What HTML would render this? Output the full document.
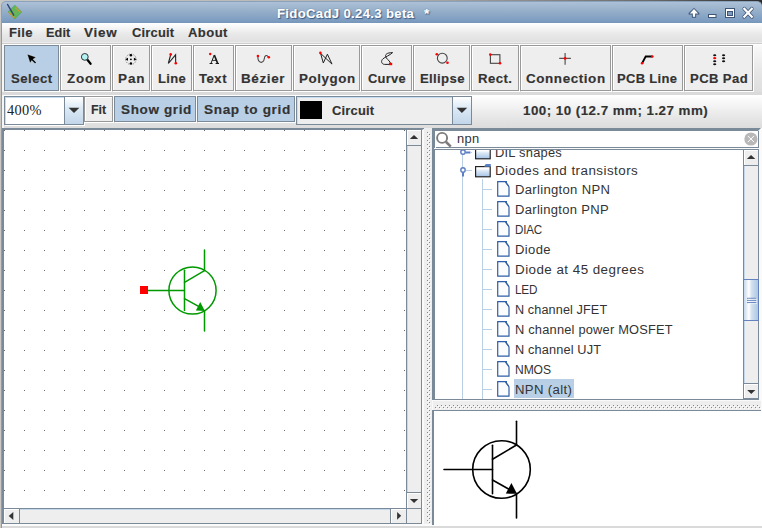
<!DOCTYPE html>
<html><head><meta charset="utf-8">
<style>
*{margin:0;padding:0;box-sizing:border-box}
html,body{width:762px;height:528px;overflow:hidden;background:#eeeeee;font-family:"Liberation Sans",sans-serif}
.a{position:absolute}
.t{position:absolute;white-space:nowrap;line-height:normal;font-family:"Liberation Sans",sans-serif;color:#333}
.btn{position:absolute;background:#eeeeee;border:1px solid #999;box-shadow:inset 1px 1px 0 #fff,1px 1px 0 #fff}
.btn.sel{background:#b8cfe5;border-color:#7a8a99;box-shadow:1px 1px 0 #fff}
.tg{position:absolute;background:#b8cfe5;border:1px solid #7a8a99;box-shadow:1px 1px 0 #fff}
svg{position:absolute;left:0;top:0;overflow:visible}
.dots{background-image:radial-gradient(circle at 0.5px 0.5px,#6a6a6a 0.7px,transparent 0.8px);background-size:20px 20px}
</style></head><body>
<!-- desktop edges -->
<div class="a" style="left:0;top:0;width:762px;height:6px;background:linear-gradient(90deg,#c8c6c3 0%,#b6b4b1 50%,#6b6b6b 85%,#2d2d2d 100%)"></div>
<div class="a" style="left:0;top:0;width:1px;height:528px;background:#cac8c5"></div>
<!-- title bar -->
<div class="a" style="left:1px;top:1px;width:761px;height:22px;border-radius:5px 5px 0 0;border-top:1px solid #8aa2bc;border-left:1px solid #86a0bd;background:linear-gradient(#adc1d7 0px,#9bb3cc 7px,#7c9cc0 19px,#7595b9 21px)"></div>
<div class="a" style="left:1px;top:23px;width:1px;height:505px;background:#809fc0"></div>
<!-- app icon -->
<svg width="762" height="528">
  <path d="M14.8 5.2 L21.7 12 L14.6 18.9 L8 11.9 Z" fill="#5cb85a" stroke="#48a048" stroke-width="0.6"/>
  <path d="M8.9 12.2 L14.5 17.9" stroke="#e8932c" stroke-width="1.7" stroke-dasharray="1.3 0.5"/>
  <path d="M15.6 7.6 L20.3 12.3" stroke="#e8932c" stroke-width="1.5" stroke-dasharray="1.3 0.5"/>
  <path d="M12.5 10.5 L16.5 14.5 M14 9.5 L17.5 13" stroke="#b89a40" stroke-width="0.5" opacity="0.7"/>
  <line x1="7.6" y1="4.5" x2="13.7" y2="15.1" stroke="#34466f" stroke-width="1.5" stroke-linecap="round"/>
  <!-- title buttons -->
  <path d="M694 7.9 L699.2 13.1 L699.2 14.4 L696 14.4 L696 17.7 L692 17.7 L692 14.4 L688.8 14.4 L688.8 13.1 Z" fill="#3d5577" opacity="0.85" stroke="#3d5577" stroke-width="0.3" stroke-linejoin="round"/><path d="M694 9.1 L698.1 13.4 L695.1 13.4 L695.1 16.8 L692.9 16.8 L692.9 13.4 L689.9 13.4 Z" fill="#fff"/>
  <rect x="708.5" y="14.5" width="7.5" height="3" fill="#fff" stroke="#3d5577" stroke-width="1"/>
  <rect x="725.5" y="8.5" width="9" height="9" fill="#fff" stroke="#3d5577" stroke-width="1"/>
  <rect x="727.5" y="11.5" width="5" height="4" fill="#7d9bbd" stroke="#3d5577" stroke-width="1"/>
  <path d="M744.3 8.8 L751.8 16.8 M751.8 8.8 L744.3 16.8" stroke="#3d5577" stroke-width="3.8" stroke-linecap="round"/>
  <path d="M744.3 8.8 L751.8 16.8 M751.8 8.8 L744.3 16.8" stroke="#fff" stroke-width="2.2" stroke-linecap="square"/>
</svg>
<!-- menubar -->
<div class="a" style="left:2px;top:23px;width:760px;height:19px;background:linear-gradient(#ffffff,#e8e8e8 60%,#e0e0e0)"></div>
<div class="a" style="left:2px;top:42px;width:760px;height:1px;background:#ececec"></div>
<div class="a" style="left:2px;top:43px;width:760px;height:1px;background:#cdcdcd"></div>
<!-- toolbar 1 -->
<div class="a" style="left:2px;top:44px;width:760px;height:48px;background:linear-gradient(#fafafa,#e6e6e6 60%,#dedede)"></div>
<div class="a" style="left:2px;top:44px;width:760px;height:1px;background:#fff"></div>
<div class="a" style="left:2px;top:44px;width:2px;height:48px;background:#f6f6f6"></div>
<div class="a" style="left:2px;top:92px;width:760px;height:3px;background:#dadada"></div>
<div class="btn sel" style="left:4px;top:45px;width:55px;height:46px"></div>
<div class="btn" style="left:60px;top:45px;width:51px;height:46px"></div>
<div class="btn" style="left:112px;top:45px;width:38px;height:46px"></div>
<div class="btn" style="left:151px;top:45px;width:41px;height:46px"></div>
<div class="btn" style="left:193px;top:45px;width:41px;height:46px"></div>
<div class="btn" style="left:235px;top:45px;width:57px;height:46px"></div>
<div class="btn" style="left:293px;top:45px;width:67px;height:46px"></div>
<div class="btn" style="left:361px;top:45px;width:51px;height:46px"></div>
<div class="btn" style="left:413px;top:45px;width:57px;height:46px"></div>
<div class="btn" style="left:471px;top:45px;width:48px;height:46px"></div>
<div class="btn" style="left:520px;top:45px;width:91px;height:46px"></div>
<div class="btn" style="left:612px;top:45px;width:71px;height:46px"></div>
<div class="btn" style="left:684px;top:45px;width:69px;height:46px"></div>
<!-- toolbar icons -->
<svg width="762" height="528">
  <!-- select arrow -->
  <path d="M27.3 54.2 L36 57.2 L33 59.2 L36.2 62.4 L35 63.6 L31.8 60.4 L30.1 63 Z" fill="#000" stroke="#fff" stroke-width="0.5" stroke-opacity="0.6"/>
  <!-- zoom -->
  <line x1="87" y1="59.3" x2="90.6" y2="63.8" stroke="#000" stroke-width="2.2" stroke-linecap="round"/>
  <circle cx="84.8" cy="56.9" r="3.4" fill="#b2f2f2" stroke="#333" stroke-width="1"/>
  <!-- pan -->
  <circle cx="130.9" cy="59.3" r="5.2" fill="none" stroke="#666" stroke-width="0.8" stroke-dasharray="1.2 1.2"/>
  <circle cx="130.9" cy="55.3" r="1.2" fill="#000"/>
  <circle cx="130.9" cy="63.4" r="1.2" fill="#000"/>
  <circle cx="130.9" cy="59.3" r="0.9" fill="#000"/>
  <path d="M125.3 59.3 L128 57.8 L128 60.8 Z" fill="#000"/>
  <path d="M136.6 59.3 L133.9 57.8 L133.9 60.8 Z" fill="#000"/>
  <!-- line -->
  <path d="M170.6 55 L168.3 63.5 L175.6 54.8 L175.7 63" fill="none" stroke="#222" stroke-width="1.1"/>
  <circle cx="170.7" cy="54.4" r="1.3" fill="#f00"/>
  <circle cx="175.8" cy="63.2" r="1.3" fill="#f00"/>
  <!-- text -->
  <g stroke="#1a1a1a" fill="none"><path d="M214.2 55.2 L211 63.3" stroke-width="1"/><path d="M214.3 55 L217.6 63.3" stroke-width="1.7"/><path d="M212.2 60.4 H216.2" stroke-width="0.9"/><path d="M209.6 63.5 H212.6 M215.6 63.5 H219" stroke-width="1"/></g>
  <circle cx="210.2" cy="54" r="1.2" fill="#f00"/>
  <!-- bezier -->
  <path d="M257.9 56.5 C257.6 63.5 263.5 64 264.2 59 C264.7 55 266.8 54.5 268.7 57.3" fill="none" stroke="#444" stroke-width="1.1"/>
  <circle cx="257.9" cy="56" r="1.3" fill="#f00"/>
  <circle cx="268.8" cy="57.3" r="1.3" fill="#f00"/>
  <!-- polygon -->
  <path d="M320.6 53.4 L323.3 63 L327.4 54.2 L332 64.1 Z" fill="none" stroke="#222" stroke-width="1"/>
  <circle cx="320.4" cy="52.9" r="1.3" fill="#f00"/>
  <!-- curve -->
  <path d="M390.5 63 C389 60 386 58.5 385.6 56.5 C385.3 54.5 386.5 52.7 392.6 52.6 C389.5 55.5 385 57 383 58.8 C380.5 61 381.5 64.2 384.5 64.4 L389 64.4" fill="none" stroke="#222" stroke-width="1"/>
  <rect x="389" y="62.8" width="3.2" height="2.4" fill="#f00"/>
  <!-- ellipse -->
  <circle cx="442.3" cy="58.2" r="4.9" fill="none" stroke="#444" stroke-width="1.1"/>
  <circle cx="436.8" cy="54.3" r="1.3" fill="#f00"/>
  <circle cx="447.5" cy="62.8" r="1.3" fill="#f00"/>
  <!-- rect -->
  <rect x="490.4" y="54.7" width="9.5" height="8.6" fill="none" stroke="#444" stroke-width="1.1"/>
  <circle cx="490.3" cy="54.6" r="1.3" fill="#f00"/>
  <circle cx="500" cy="63.3" r="1.3" fill="#f00"/>
  <!-- connection -->
  <path d="M559.2 58.4 H570.9 M565.1 53.1 V64.7" stroke="#555" stroke-width="1.2"/>
  <circle cx="565.1" cy="58.4" r="1.4" fill="#f00"/>
  <!-- pcb line -->
  <path d="M642.1 63.2 L645.7 56.5 H652.3" fill="none" stroke="#000" stroke-width="1.8"/>
  <circle cx="642.1" cy="63.2" r="1.3" fill="#f00"/>
  <circle cx="652.3" cy="56.5" r="1.3" fill="#f00"/>
  <!-- pcb pad -->
  <g fill="#111">
    <ellipse cx="714.7" cy="55.2" rx="1.6" ry="1"/>
    <ellipse cx="714.7" cy="61.25" rx="1.6" ry="1"/>
    <ellipse cx="714.7" cy="64.3" rx="1.6" ry="1"/>
    <ellipse cx="723.6" cy="55.2" rx="1.6" ry="1"/>
    <ellipse cx="723.6" cy="58.2" rx="1.6" ry="1"/>
    <ellipse cx="723.6" cy="61.25" rx="1.6" ry="1"/>
  </g>
  <ellipse cx="714.7" cy="58.2" rx="1.6" ry="1.1" fill="#f00"/>
</svg>
<!-- toolbar 2 -->
<div class="a" style="left:2px;top:95px;width:760px;height:33px;background:linear-gradient(#ffffff,#e6e6e6 70%,#dcdcdc)"></div>
<div class="a" style="left:2px;top:95px;width:2px;height:33px;background:#f6f6f6"></div>
<!-- zoom combo -->
<div class="a" style="left:4px;top:96px;width:80px;height:29px;border:1px solid #7a8a99;background:#fff;box-shadow:1px 1px 0 #fff"></div>
<div class="a" style="left:5px;top:97px;width:59px;height:27px;border-top:1px solid #c8dcf0;border-left:1px solid #c8dcf0"></div>
<div class="a" style="left:64px;top:97px;width:19px;height:27px;border-left:1px solid #7a8a99;background:linear-gradient(#ffffff,#ddeaf6 40%,#c2d6ea)"></div>
<svg width="762" height="528"><path d="M68.6 107.8 H79.4 L74 113 Z" fill="#333"/></svg>
<div class="btn" style="left:84px;top:96px;width:29px;height:26px"></div>
<div class="tg" style="left:114px;top:96px;width:82px;height:26px"></div>
<div class="tg" style="left:197px;top:96px;width:98px;height:26px"></div>
<!-- layer combo -->
<div class="a" style="left:296px;top:96px;width:176px;height:29px;border:1px solid #7a8a99;background:#eeeeee;box-shadow:inset 1px 1px 0 #fff"></div>
<div class="a" style="left:297px;top:97px;width:155px;height:27px;border-top:1px solid #c8dcf0;border-left:1px solid #c8dcf0"></div>
<div class="a" style="left:300px;top:101px;width:22px;height:18px;background:#000"></div>
<div class="a" style="left:452px;top:97px;width:19px;height:27px;border-left:1px solid #7a8a99;background:linear-gradient(#ffffff,#ddeaf6 40%,#c2d6ea)"></div>
<svg width="762" height="528"><path d="M456.6 107.8 H467.2 L461.9 113 Z" fill="#333"/></svg>

<!-- ================= main area ================= -->
<!-- left canvas scrollpane -->
<div class="a" style="left:2px;top:128px;width:420px;height:396px;background:#7a8a99"></div>
<div class="a" style="left:4px;top:130px;width:402px;height:378px;background:#fff"></div>
<div class="a dots" style="left:4px;top:130px;width:402px;height:378px"></div>
<!-- left vertical scrollbar -->
<div class="a" style="left:407px;top:130px;width:14px;height:378px;background:#eeeeee"></div>
<div class="a" style="left:407px;top:146px;width:1px;height:346px;background:#c4d8ec"></div>
<div class="a" style="left:407px;top:130px;width:14px;height:16px;background:#eeeeee;border-bottom:1px solid #7a8a99;box-shadow:inset 1px 1px 0 #fff"></div>
<div class="a" style="left:407px;top:492px;width:14px;height:16px;background:#eeeeee;border-top:1px solid #7a8a99;box-shadow:inset 1px 1px 0 #fff"></div>
<div class="a" style="left:406px;top:130px;width:1px;height:393px;background:#7a8a99"></div>
<!-- horizontal scrollbar -->
<div class="a" style="left:4px;top:508px;width:402px;height:15px;background:#eeeeee;border-top:1px solid #7a8a99"></div>
<div class="a" style="left:20px;top:509px;width:370px;height:1px;background:#c4d8ec"></div>
<div class="a" style="left:4px;top:509px;width:16px;height:14px;background:#eeeeee;border-right:1px solid #7a8a99;box-shadow:inset 1px 1px 0 #fff"></div>
<div class="a" style="left:390px;top:509px;width:16px;height:14px;background:#eeeeee;border-left:1px solid #7a8a99;box-shadow:inset 1px 1px 0 #fff"></div>
<div class="a" style="left:407px;top:508px;width:14px;height:15px;background:#eeeeee;border-top:1px solid #7a8a99"></div>
<svg width="762" height="528">
  <path d="M409.8 139 H418.2 L414 134.9 Z" fill="#333"/>
  <path d="M409.9 499.1 H418.2 L414.05 503.1 Z" fill="#333"/>
  <path d="M13.3 511.9 V519.9 L8.7 515.9 Z" fill="#333"/>
  <path d="M397.1 511.9 V519.8 L401.2 515.85 Z" fill="#333"/>
</svg>
<!-- left-right divider -->
<div class="a" style="left:422px;top:128px;width:10px;height:398px;background:#eeeeee"></div>
<div class="a" style="left:422px;top:130px;width:2px;height:394px;background:#fafafa"></div>
<div class="a" style="left:422px;top:128px;width:2px;height:1px;background:#7a8a99"></div><div class="a" style="left:422px;top:129px;width:1px;height:1px;background:#a0acb8"></div>
<svg width="762" height="528"><rect x="427" y="132" width="1" height="1" fill="#7a8a99"/><rect x="428" y="133" width="1" height="1" fill="#fff"/><rect x="427" y="136" width="1" height="1" fill="#7a8a99"/><rect x="428" y="137" width="1" height="1" fill="#fff"/><rect x="427" y="140" width="1" height="1" fill="#7a8a99"/><rect x="428" y="141" width="1" height="1" fill="#fff"/><rect x="427" y="144" width="1" height="1" fill="#7a8a99"/><rect x="428" y="145" width="1" height="1" fill="#fff"/><rect x="427" y="148" width="1" height="1" fill="#7a8a99"/><rect x="428" y="149" width="1" height="1" fill="#fff"/><rect x="427" y="152" width="1" height="1" fill="#7a8a99"/><rect x="428" y="153" width="1" height="1" fill="#fff"/><rect x="427" y="156" width="1" height="1" fill="#7a8a99"/><rect x="428" y="157" width="1" height="1" fill="#fff"/><rect x="427" y="160" width="1" height="1" fill="#7a8a99"/><rect x="428" y="161" width="1" height="1" fill="#fff"/><rect x="427" y="164" width="1" height="1" fill="#7a8a99"/><rect x="428" y="165" width="1" height="1" fill="#fff"/><rect x="427" y="168" width="1" height="1" fill="#7a8a99"/><rect x="428" y="169" width="1" height="1" fill="#fff"/><rect x="427" y="172" width="1" height="1" fill="#7a8a99"/><rect x="428" y="173" width="1" height="1" fill="#fff"/><rect x="427" y="176" width="1" height="1" fill="#7a8a99"/><rect x="428" y="177" width="1" height="1" fill="#fff"/><rect x="427" y="180" width="1" height="1" fill="#7a8a99"/><rect x="428" y="181" width="1" height="1" fill="#fff"/><rect x="427" y="184" width="1" height="1" fill="#7a8a99"/><rect x="428" y="185" width="1" height="1" fill="#fff"/><rect x="427" y="188" width="1" height="1" fill="#7a8a99"/><rect x="428" y="189" width="1" height="1" fill="#fff"/><rect x="427" y="192" width="1" height="1" fill="#7a8a99"/><rect x="428" y="193" width="1" height="1" fill="#fff"/><rect x="427" y="196" width="1" height="1" fill="#7a8a99"/><rect x="428" y="197" width="1" height="1" fill="#fff"/><rect x="427" y="200" width="1" height="1" fill="#7a8a99"/><rect x="428" y="201" width="1" height="1" fill="#fff"/><rect x="427" y="204" width="1" height="1" fill="#7a8a99"/><rect x="428" y="205" width="1" height="1" fill="#fff"/><rect x="427" y="208" width="1" height="1" fill="#7a8a99"/><rect x="428" y="209" width="1" height="1" fill="#fff"/><rect x="427" y="212" width="1" height="1" fill="#7a8a99"/><rect x="428" y="213" width="1" height="1" fill="#fff"/><rect x="427" y="216" width="1" height="1" fill="#7a8a99"/><rect x="428" y="217" width="1" height="1" fill="#fff"/><rect x="427" y="220" width="1" height="1" fill="#7a8a99"/><rect x="428" y="221" width="1" height="1" fill="#fff"/><rect x="427" y="224" width="1" height="1" fill="#7a8a99"/><rect x="428" y="225" width="1" height="1" fill="#fff"/><rect x="427" y="228" width="1" height="1" fill="#7a8a99"/><rect x="428" y="229" width="1" height="1" fill="#fff"/><rect x="427" y="232" width="1" height="1" fill="#7a8a99"/><rect x="428" y="233" width="1" height="1" fill="#fff"/><rect x="427" y="236" width="1" height="1" fill="#7a8a99"/><rect x="428" y="237" width="1" height="1" fill="#fff"/><rect x="427" y="240" width="1" height="1" fill="#7a8a99"/><rect x="428" y="241" width="1" height="1" fill="#fff"/><rect x="427" y="244" width="1" height="1" fill="#7a8a99"/><rect x="428" y="245" width="1" height="1" fill="#fff"/><rect x="427" y="248" width="1" height="1" fill="#7a8a99"/><rect x="428" y="249" width="1" height="1" fill="#fff"/><rect x="427" y="252" width="1" height="1" fill="#7a8a99"/><rect x="428" y="253" width="1" height="1" fill="#fff"/><rect x="427" y="256" width="1" height="1" fill="#7a8a99"/><rect x="428" y="257" width="1" height="1" fill="#fff"/><rect x="427" y="260" width="1" height="1" fill="#7a8a99"/><rect x="428" y="261" width="1" height="1" fill="#fff"/><rect x="427" y="264" width="1" height="1" fill="#7a8a99"/><rect x="428" y="265" width="1" height="1" fill="#fff"/><rect x="427" y="268" width="1" height="1" fill="#7a8a99"/><rect x="428" y="269" width="1" height="1" fill="#fff"/><rect x="427" y="272" width="1" height="1" fill="#7a8a99"/><rect x="428" y="273" width="1" height="1" fill="#fff"/><rect x="427" y="276" width="1" height="1" fill="#7a8a99"/><rect x="428" y="277" width="1" height="1" fill="#fff"/><rect x="427" y="280" width="1" height="1" fill="#7a8a99"/><rect x="428" y="281" width="1" height="1" fill="#fff"/><rect x="427" y="284" width="1" height="1" fill="#7a8a99"/><rect x="428" y="285" width="1" height="1" fill="#fff"/><rect x="427" y="288" width="1" height="1" fill="#7a8a99"/><rect x="428" y="289" width="1" height="1" fill="#fff"/><rect x="427" y="292" width="1" height="1" fill="#7a8a99"/><rect x="428" y="293" width="1" height="1" fill="#fff"/><rect x="427" y="296" width="1" height="1" fill="#7a8a99"/><rect x="428" y="297" width="1" height="1" fill="#fff"/><rect x="427" y="300" width="1" height="1" fill="#7a8a99"/><rect x="428" y="301" width="1" height="1" fill="#fff"/><rect x="427" y="304" width="1" height="1" fill="#7a8a99"/><rect x="428" y="305" width="1" height="1" fill="#fff"/><rect x="427" y="308" width="1" height="1" fill="#7a8a99"/><rect x="428" y="309" width="1" height="1" fill="#fff"/><rect x="427" y="312" width="1" height="1" fill="#7a8a99"/><rect x="428" y="313" width="1" height="1" fill="#fff"/><rect x="427" y="316" width="1" height="1" fill="#7a8a99"/><rect x="428" y="317" width="1" height="1" fill="#fff"/><rect x="427" y="320" width="1" height="1" fill="#7a8a99"/><rect x="428" y="321" width="1" height="1" fill="#fff"/><rect x="427" y="324" width="1" height="1" fill="#7a8a99"/><rect x="428" y="325" width="1" height="1" fill="#fff"/><rect x="427" y="328" width="1" height="1" fill="#7a8a99"/><rect x="428" y="329" width="1" height="1" fill="#fff"/><rect x="427" y="332" width="1" height="1" fill="#7a8a99"/><rect x="428" y="333" width="1" height="1" fill="#fff"/><rect x="427" y="336" width="1" height="1" fill="#7a8a99"/><rect x="428" y="337" width="1" height="1" fill="#fff"/><rect x="427" y="340" width="1" height="1" fill="#7a8a99"/><rect x="428" y="341" width="1" height="1" fill="#fff"/><rect x="427" y="344" width="1" height="1" fill="#7a8a99"/><rect x="428" y="345" width="1" height="1" fill="#fff"/><rect x="427" y="348" width="1" height="1" fill="#7a8a99"/><rect x="428" y="349" width="1" height="1" fill="#fff"/><rect x="427" y="352" width="1" height="1" fill="#7a8a99"/><rect x="428" y="353" width="1" height="1" fill="#fff"/><rect x="427" y="356" width="1" height="1" fill="#7a8a99"/><rect x="428" y="357" width="1" height="1" fill="#fff"/><rect x="427" y="360" width="1" height="1" fill="#7a8a99"/><rect x="428" y="361" width="1" height="1" fill="#fff"/><rect x="427" y="364" width="1" height="1" fill="#7a8a99"/><rect x="428" y="365" width="1" height="1" fill="#fff"/><rect x="427" y="368" width="1" height="1" fill="#7a8a99"/><rect x="428" y="369" width="1" height="1" fill="#fff"/><rect x="427" y="372" width="1" height="1" fill="#7a8a99"/><rect x="428" y="373" width="1" height="1" fill="#fff"/><rect x="427" y="376" width="1" height="1" fill="#7a8a99"/><rect x="428" y="377" width="1" height="1" fill="#fff"/><rect x="427" y="380" width="1" height="1" fill="#7a8a99"/><rect x="428" y="381" width="1" height="1" fill="#fff"/><rect x="427" y="384" width="1" height="1" fill="#7a8a99"/><rect x="428" y="385" width="1" height="1" fill="#fff"/><rect x="427" y="388" width="1" height="1" fill="#7a8a99"/><rect x="428" y="389" width="1" height="1" fill="#fff"/><rect x="427" y="392" width="1" height="1" fill="#7a8a99"/><rect x="428" y="393" width="1" height="1" fill="#fff"/><rect x="427" y="396" width="1" height="1" fill="#7a8a99"/><rect x="428" y="397" width="1" height="1" fill="#fff"/><rect x="427" y="400" width="1" height="1" fill="#7a8a99"/><rect x="428" y="401" width="1" height="1" fill="#fff"/><rect x="427" y="404" width="1" height="1" fill="#7a8a99"/><rect x="428" y="405" width="1" height="1" fill="#fff"/><rect x="427" y="408" width="1" height="1" fill="#7a8a99"/><rect x="428" y="409" width="1" height="1" fill="#fff"/><rect x="427" y="412" width="1" height="1" fill="#7a8a99"/><rect x="428" y="413" width="1" height="1" fill="#fff"/><rect x="427" y="416" width="1" height="1" fill="#7a8a99"/><rect x="428" y="417" width="1" height="1" fill="#fff"/><rect x="427" y="420" width="1" height="1" fill="#7a8a99"/><rect x="428" y="421" width="1" height="1" fill="#fff"/><rect x="427" y="424" width="1" height="1" fill="#7a8a99"/><rect x="428" y="425" width="1" height="1" fill="#fff"/><rect x="427" y="428" width="1" height="1" fill="#7a8a99"/><rect x="428" y="429" width="1" height="1" fill="#fff"/><rect x="427" y="432" width="1" height="1" fill="#7a8a99"/><rect x="428" y="433" width="1" height="1" fill="#fff"/><rect x="427" y="436" width="1" height="1" fill="#7a8a99"/><rect x="428" y="437" width="1" height="1" fill="#fff"/><rect x="427" y="440" width="1" height="1" fill="#7a8a99"/><rect x="428" y="441" width="1" height="1" fill="#fff"/><rect x="427" y="444" width="1" height="1" fill="#7a8a99"/><rect x="428" y="445" width="1" height="1" fill="#fff"/><rect x="427" y="448" width="1" height="1" fill="#7a8a99"/><rect x="428" y="449" width="1" height="1" fill="#fff"/><rect x="427" y="452" width="1" height="1" fill="#7a8a99"/><rect x="428" y="453" width="1" height="1" fill="#fff"/><rect x="427" y="456" width="1" height="1" fill="#7a8a99"/><rect x="428" y="457" width="1" height="1" fill="#fff"/><rect x="427" y="460" width="1" height="1" fill="#7a8a99"/><rect x="428" y="461" width="1" height="1" fill="#fff"/><rect x="427" y="464" width="1" height="1" fill="#7a8a99"/><rect x="428" y="465" width="1" height="1" fill="#fff"/><rect x="427" y="468" width="1" height="1" fill="#7a8a99"/><rect x="428" y="469" width="1" height="1" fill="#fff"/><rect x="427" y="472" width="1" height="1" fill="#7a8a99"/><rect x="428" y="473" width="1" height="1" fill="#fff"/><rect x="427" y="476" width="1" height="1" fill="#7a8a99"/><rect x="428" y="477" width="1" height="1" fill="#fff"/><rect x="427" y="480" width="1" height="1" fill="#7a8a99"/><rect x="428" y="481" width="1" height="1" fill="#fff"/><rect x="427" y="484" width="1" height="1" fill="#7a8a99"/><rect x="428" y="485" width="1" height="1" fill="#fff"/><rect x="427" y="488" width="1" height="1" fill="#7a8a99"/><rect x="428" y="489" width="1" height="1" fill="#fff"/><rect x="427" y="492" width="1" height="1" fill="#7a8a99"/><rect x="428" y="493" width="1" height="1" fill="#fff"/><rect x="427" y="496" width="1" height="1" fill="#7a8a99"/><rect x="428" y="497" width="1" height="1" fill="#fff"/><rect x="427" y="500" width="1" height="1" fill="#7a8a99"/><rect x="428" y="501" width="1" height="1" fill="#fff"/><rect x="427" y="504" width="1" height="1" fill="#7a8a99"/><rect x="428" y="505" width="1" height="1" fill="#fff"/><rect x="427" y="508" width="1" height="1" fill="#7a8a99"/><rect x="428" y="509" width="1" height="1" fill="#fff"/><rect x="427" y="512" width="1" height="1" fill="#7a8a99"/><rect x="428" y="513" width="1" height="1" fill="#fff"/><rect x="427" y="516" width="1" height="1" fill="#7a8a99"/><rect x="428" y="517" width="1" height="1" fill="#fff"/><rect x="427" y="520" width="1" height="1" fill="#7a8a99"/><rect x="428" y="521" width="1" height="1" fill="#fff"/><rect x="429" y="134" width="1" height="1" fill="#7a8a99"/><rect x="430" y="135" width="1" height="1" fill="#fff"/><rect x="429" y="138" width="1" height="1" fill="#7a8a99"/><rect x="430" y="139" width="1" height="1" fill="#fff"/><rect x="429" y="142" width="1" height="1" fill="#7a8a99"/><rect x="430" y="143" width="1" height="1" fill="#fff"/><rect x="429" y="146" width="1" height="1" fill="#7a8a99"/><rect x="430" y="147" width="1" height="1" fill="#fff"/><rect x="429" y="150" width="1" height="1" fill="#7a8a99"/><rect x="430" y="151" width="1" height="1" fill="#fff"/><rect x="429" y="154" width="1" height="1" fill="#7a8a99"/><rect x="430" y="155" width="1" height="1" fill="#fff"/><rect x="429" y="158" width="1" height="1" fill="#7a8a99"/><rect x="430" y="159" width="1" height="1" fill="#fff"/><rect x="429" y="162" width="1" height="1" fill="#7a8a99"/><rect x="430" y="163" width="1" height="1" fill="#fff"/><rect x="429" y="166" width="1" height="1" fill="#7a8a99"/><rect x="430" y="167" width="1" height="1" fill="#fff"/><rect x="429" y="170" width="1" height="1" fill="#7a8a99"/><rect x="430" y="171" width="1" height="1" fill="#fff"/><rect x="429" y="174" width="1" height="1" fill="#7a8a99"/><rect x="430" y="175" width="1" height="1" fill="#fff"/><rect x="429" y="178" width="1" height="1" fill="#7a8a99"/><rect x="430" y="179" width="1" height="1" fill="#fff"/><rect x="429" y="182" width="1" height="1" fill="#7a8a99"/><rect x="430" y="183" width="1" height="1" fill="#fff"/><rect x="429" y="186" width="1" height="1" fill="#7a8a99"/><rect x="430" y="187" width="1" height="1" fill="#fff"/><rect x="429" y="190" width="1" height="1" fill="#7a8a99"/><rect x="430" y="191" width="1" height="1" fill="#fff"/><rect x="429" y="194" width="1" height="1" fill="#7a8a99"/><rect x="430" y="195" width="1" height="1" fill="#fff"/><rect x="429" y="198" width="1" height="1" fill="#7a8a99"/><rect x="430" y="199" width="1" height="1" fill="#fff"/><rect x="429" y="202" width="1" height="1" fill="#7a8a99"/><rect x="430" y="203" width="1" height="1" fill="#fff"/><rect x="429" y="206" width="1" height="1" fill="#7a8a99"/><rect x="430" y="207" width="1" height="1" fill="#fff"/><rect x="429" y="210" width="1" height="1" fill="#7a8a99"/><rect x="430" y="211" width="1" height="1" fill="#fff"/><rect x="429" y="214" width="1" height="1" fill="#7a8a99"/><rect x="430" y="215" width="1" height="1" fill="#fff"/><rect x="429" y="218" width="1" height="1" fill="#7a8a99"/><rect x="430" y="219" width="1" height="1" fill="#fff"/><rect x="429" y="222" width="1" height="1" fill="#7a8a99"/><rect x="430" y="223" width="1" height="1" fill="#fff"/><rect x="429" y="226" width="1" height="1" fill="#7a8a99"/><rect x="430" y="227" width="1" height="1" fill="#fff"/><rect x="429" y="230" width="1" height="1" fill="#7a8a99"/><rect x="430" y="231" width="1" height="1" fill="#fff"/><rect x="429" y="234" width="1" height="1" fill="#7a8a99"/><rect x="430" y="235" width="1" height="1" fill="#fff"/><rect x="429" y="238" width="1" height="1" fill="#7a8a99"/><rect x="430" y="239" width="1" height="1" fill="#fff"/><rect x="429" y="242" width="1" height="1" fill="#7a8a99"/><rect x="430" y="243" width="1" height="1" fill="#fff"/><rect x="429" y="246" width="1" height="1" fill="#7a8a99"/><rect x="430" y="247" width="1" height="1" fill="#fff"/><rect x="429" y="250" width="1" height="1" fill="#7a8a99"/><rect x="430" y="251" width="1" height="1" fill="#fff"/><rect x="429" y="254" width="1" height="1" fill="#7a8a99"/><rect x="430" y="255" width="1" height="1" fill="#fff"/><rect x="429" y="258" width="1" height="1" fill="#7a8a99"/><rect x="430" y="259" width="1" height="1" fill="#fff"/><rect x="429" y="262" width="1" height="1" fill="#7a8a99"/><rect x="430" y="263" width="1" height="1" fill="#fff"/><rect x="429" y="266" width="1" height="1" fill="#7a8a99"/><rect x="430" y="267" width="1" height="1" fill="#fff"/><rect x="429" y="270" width="1" height="1" fill="#7a8a99"/><rect x="430" y="271" width="1" height="1" fill="#fff"/><rect x="429" y="274" width="1" height="1" fill="#7a8a99"/><rect x="430" y="275" width="1" height="1" fill="#fff"/><rect x="429" y="278" width="1" height="1" fill="#7a8a99"/><rect x="430" y="279" width="1" height="1" fill="#fff"/><rect x="429" y="282" width="1" height="1" fill="#7a8a99"/><rect x="430" y="283" width="1" height="1" fill="#fff"/><rect x="429" y="286" width="1" height="1" fill="#7a8a99"/><rect x="430" y="287" width="1" height="1" fill="#fff"/><rect x="429" y="290" width="1" height="1" fill="#7a8a99"/><rect x="430" y="291" width="1" height="1" fill="#fff"/><rect x="429" y="294" width="1" height="1" fill="#7a8a99"/><rect x="430" y="295" width="1" height="1" fill="#fff"/><rect x="429" y="298" width="1" height="1" fill="#7a8a99"/><rect x="430" y="299" width="1" height="1" fill="#fff"/><rect x="429" y="302" width="1" height="1" fill="#7a8a99"/><rect x="430" y="303" width="1" height="1" fill="#fff"/><rect x="429" y="306" width="1" height="1" fill="#7a8a99"/><rect x="430" y="307" width="1" height="1" fill="#fff"/><rect x="429" y="310" width="1" height="1" fill="#7a8a99"/><rect x="430" y="311" width="1" height="1" fill="#fff"/><rect x="429" y="314" width="1" height="1" fill="#7a8a99"/><rect x="430" y="315" width="1" height="1" fill="#fff"/><rect x="429" y="318" width="1" height="1" fill="#7a8a99"/><rect x="430" y="319" width="1" height="1" fill="#fff"/><rect x="429" y="322" width="1" height="1" fill="#7a8a99"/><rect x="430" y="323" width="1" height="1" fill="#fff"/><rect x="429" y="326" width="1" height="1" fill="#7a8a99"/><rect x="430" y="327" width="1" height="1" fill="#fff"/><rect x="429" y="330" width="1" height="1" fill="#7a8a99"/><rect x="430" y="331" width="1" height="1" fill="#fff"/><rect x="429" y="334" width="1" height="1" fill="#7a8a99"/><rect x="430" y="335" width="1" height="1" fill="#fff"/><rect x="429" y="338" width="1" height="1" fill="#7a8a99"/><rect x="430" y="339" width="1" height="1" fill="#fff"/><rect x="429" y="342" width="1" height="1" fill="#7a8a99"/><rect x="430" y="343" width="1" height="1" fill="#fff"/><rect x="429" y="346" width="1" height="1" fill="#7a8a99"/><rect x="430" y="347" width="1" height="1" fill="#fff"/><rect x="429" y="350" width="1" height="1" fill="#7a8a99"/><rect x="430" y="351" width="1" height="1" fill="#fff"/><rect x="429" y="354" width="1" height="1" fill="#7a8a99"/><rect x="430" y="355" width="1" height="1" fill="#fff"/><rect x="429" y="358" width="1" height="1" fill="#7a8a99"/><rect x="430" y="359" width="1" height="1" fill="#fff"/><rect x="429" y="362" width="1" height="1" fill="#7a8a99"/><rect x="430" y="363" width="1" height="1" fill="#fff"/><rect x="429" y="366" width="1" height="1" fill="#7a8a99"/><rect x="430" y="367" width="1" height="1" fill="#fff"/><rect x="429" y="370" width="1" height="1" fill="#7a8a99"/><rect x="430" y="371" width="1" height="1" fill="#fff"/><rect x="429" y="374" width="1" height="1" fill="#7a8a99"/><rect x="430" y="375" width="1" height="1" fill="#fff"/><rect x="429" y="378" width="1" height="1" fill="#7a8a99"/><rect x="430" y="379" width="1" height="1" fill="#fff"/><rect x="429" y="382" width="1" height="1" fill="#7a8a99"/><rect x="430" y="383" width="1" height="1" fill="#fff"/><rect x="429" y="386" width="1" height="1" fill="#7a8a99"/><rect x="430" y="387" width="1" height="1" fill="#fff"/><rect x="429" y="390" width="1" height="1" fill="#7a8a99"/><rect x="430" y="391" width="1" height="1" fill="#fff"/><rect x="429" y="394" width="1" height="1" fill="#7a8a99"/><rect x="430" y="395" width="1" height="1" fill="#fff"/><rect x="429" y="398" width="1" height="1" fill="#7a8a99"/><rect x="430" y="399" width="1" height="1" fill="#fff"/><rect x="429" y="402" width="1" height="1" fill="#7a8a99"/><rect x="430" y="403" width="1" height="1" fill="#fff"/><rect x="429" y="406" width="1" height="1" fill="#7a8a99"/><rect x="430" y="407" width="1" height="1" fill="#fff"/><rect x="429" y="410" width="1" height="1" fill="#7a8a99"/><rect x="430" y="411" width="1" height="1" fill="#fff"/><rect x="429" y="414" width="1" height="1" fill="#7a8a99"/><rect x="430" y="415" width="1" height="1" fill="#fff"/><rect x="429" y="418" width="1" height="1" fill="#7a8a99"/><rect x="430" y="419" width="1" height="1" fill="#fff"/><rect x="429" y="422" width="1" height="1" fill="#7a8a99"/><rect x="430" y="423" width="1" height="1" fill="#fff"/><rect x="429" y="426" width="1" height="1" fill="#7a8a99"/><rect x="430" y="427" width="1" height="1" fill="#fff"/><rect x="429" y="430" width="1" height="1" fill="#7a8a99"/><rect x="430" y="431" width="1" height="1" fill="#fff"/><rect x="429" y="434" width="1" height="1" fill="#7a8a99"/><rect x="430" y="435" width="1" height="1" fill="#fff"/><rect x="429" y="438" width="1" height="1" fill="#7a8a99"/><rect x="430" y="439" width="1" height="1" fill="#fff"/><rect x="429" y="442" width="1" height="1" fill="#7a8a99"/><rect x="430" y="443" width="1" height="1" fill="#fff"/><rect x="429" y="446" width="1" height="1" fill="#7a8a99"/><rect x="430" y="447" width="1" height="1" fill="#fff"/><rect x="429" y="450" width="1" height="1" fill="#7a8a99"/><rect x="430" y="451" width="1" height="1" fill="#fff"/><rect x="429" y="454" width="1" height="1" fill="#7a8a99"/><rect x="430" y="455" width="1" height="1" fill="#fff"/><rect x="429" y="458" width="1" height="1" fill="#7a8a99"/><rect x="430" y="459" width="1" height="1" fill="#fff"/><rect x="429" y="462" width="1" height="1" fill="#7a8a99"/><rect x="430" y="463" width="1" height="1" fill="#fff"/><rect x="429" y="466" width="1" height="1" fill="#7a8a99"/><rect x="430" y="467" width="1" height="1" fill="#fff"/><rect x="429" y="470" width="1" height="1" fill="#7a8a99"/><rect x="430" y="471" width="1" height="1" fill="#fff"/><rect x="429" y="474" width="1" height="1" fill="#7a8a99"/><rect x="430" y="475" width="1" height="1" fill="#fff"/><rect x="429" y="478" width="1" height="1" fill="#7a8a99"/><rect x="430" y="479" width="1" height="1" fill="#fff"/><rect x="429" y="482" width="1" height="1" fill="#7a8a99"/><rect x="430" y="483" width="1" height="1" fill="#fff"/><rect x="429" y="486" width="1" height="1" fill="#7a8a99"/><rect x="430" y="487" width="1" height="1" fill="#fff"/><rect x="429" y="490" width="1" height="1" fill="#7a8a99"/><rect x="430" y="491" width="1" height="1" fill="#fff"/><rect x="429" y="494" width="1" height="1" fill="#7a8a99"/><rect x="430" y="495" width="1" height="1" fill="#fff"/><rect x="429" y="498" width="1" height="1" fill="#7a8a99"/><rect x="430" y="499" width="1" height="1" fill="#fff"/><rect x="429" y="502" width="1" height="1" fill="#7a8a99"/><rect x="430" y="503" width="1" height="1" fill="#fff"/><rect x="429" y="506" width="1" height="1" fill="#7a8a99"/><rect x="430" y="507" width="1" height="1" fill="#fff"/><rect x="429" y="510" width="1" height="1" fill="#7a8a99"/><rect x="430" y="511" width="1" height="1" fill="#fff"/><rect x="429" y="514" width="1" height="1" fill="#7a8a99"/><rect x="430" y="515" width="1" height="1" fill="#fff"/><rect x="429" y="518" width="1" height="1" fill="#7a8a99"/><rect x="430" y="519" width="1" height="1" fill="#fff"/><rect x="429" y="522" width="1" height="1" fill="#7a8a99"/><rect x="430" y="523" width="1" height="1" fill="#fff"/></svg>

<!-- right panel -->
<div class="a" style="left:432px;top:128px;width:330px;height:398px;background:#fafafa"></div>
<div class="a" style="left:432px;top:128px;width:329px;height:3px;background:#7a8a99;clip-path:polygon(0 0,100% 0,calc(100% - 3px) 100%,0 100%)"></div>
<div class="a" style="left:432px;top:128px;width:2px;height:272px;background:#7a8a99"></div>
<div class="a" style="left:432px;top:410px;width:2px;height:115px;background:#7a8a99"></div>
<!-- search field -->
<div class="a" style="left:434px;top:131px;width:325px;height:17px;background:#fff;border-left:1px solid #7a8a99;border-right:1px solid #7a8a99"></div>
<div class="a" style="left:436px;top:147px;width:323px;height:1px;background:#7a8a99"></div>
<svg width="762" height="528">
  <circle cx="442.1" cy="137.9" r="5.0" fill="none" stroke="#7c7c7c" stroke-width="1.9"/>
  <line x1="445.9" y1="141.8" x2="450.8" y2="146.6" stroke="#7c7c7c" stroke-width="2.6" stroke-linecap="butt"/>
  <circle cx="750.9" cy="139" r="6.6" fill="#b8b8b8"/>
  <path d="M747.8 135.9 L754 142.1 M754 135.9 L747.8 142.1" stroke="#fff" stroke-width="1"/>
</svg>
<!-- tree scrollpane -->
<div class="a" style="left:434px;top:149px;width:325px;height:251px;background:#7a8a99"></div>
<div class="a" style="left:435px;top:150px;width:308px;height:249px;background:#fff"></div>
<div class="a" style="left:514px;top:379px;width:60px;height:19px;background:#b8cfe5"></div>
<!-- tree scrollbar -->
<div class="a" style="left:744px;top:150px;width:14px;height:248px;background:#eeeeee"></div>
<div class="a" style="left:744px;top:166px;width:1px;height:217px;background:#c4d8ec"></div>
<div class="a" style="left:744px;top:150px;width:14px;height:16px;background:#eeeeee;border-bottom:1px solid #7a8a99;box-shadow:inset 1px 1px 0 #fff"></div>
<div class="a" style="left:744px;top:383px;width:14px;height:16px;background:#eeeeee;border-top:1px solid #7a8a99;border-bottom:1px solid #7a8a99;box-shadow:inset 1px 1px 0 #fff"></div>
<div class="a" style="left:743px;top:279px;width:16px;height:42px;border:1px solid #6382bf;background:linear-gradient(90deg,#c4d8ec,#ffffff 35%,#d0e0f0 55%,#b0c8e0)"></div>
<svg width="762" height="528">
  <path d="M746.8 158.9 H755.3 L751.05 154.9 Z" fill="#333"/>
  <path d="M747.2 390 H755.3 L751.25 394.1 Z" fill="#333"/>
  <path d="M747 298.3 H756 M747 300.4 H756 M747 302.6 H756" stroke="#6382bf" stroke-width="1"/>
  <path d="M748 299.3 H757 M748 301.4 H757 M748 303.6 H757" stroke="#fff" stroke-width="0.8" opacity="0.8"/>
</svg>
<!-- tree lines & icons -->
<svg width="762" height="528"><rect x="462" y="150" width="1" height="249" fill="#b8cfe5"/>
<defs><linearGradient id="fg" x1="0" y1="0" x2="0" y2="1"><stop offset="0" stop-color="#ffffff"/><stop offset="0.2" stop-color="#ffffff"/><stop offset="0.45" stop-color="#d8e6f4"/><stop offset="1" stop-color="#a4c2e6"/></linearGradient></defs>
<svg x="0" y="150" width="762" height="249" style="overflow:hidden"><g transform="translate(0,-150)">
<circle cx="463" cy="152" r="2.2" fill="#fff" stroke="#5b7fc4" stroke-width="1.4"/><rect x="465.5" y="151.5" width="5" height="2" fill="#5b7fc4"/><rect x="470" y="152" width="2" height="1" fill="#b8cfe5"/>
<rect x="475.6" y="148.6" width="14.6" height="10.2" fill="url(#fg)" stroke="#1e1e1e" stroke-width="1.15"/>
<circle cx="463" cy="170" r="2.2" fill="#fff" stroke="#5b7fc4" stroke-width="1.4"/><rect x="462" y="172" width="2" height="4.5" fill="#5b7fc4"/><rect x="466" y="170" width="6" height="1" fill="#b8cfe5"/>
<rect x="475.6" y="166.6" width="14.6" height="10.2" fill="url(#fg)" stroke="#1e1e1e" stroke-width="1.15"/><path d="M484.5 165.8 L485.8 164 H490.8 V166.8 H484.5 Z" fill="#5b7fc4"/>
<rect x="482" y="179" width="1" height="221" fill="#b8cfe5"/>
<rect x="483" y="189" width="9" height="1" fill="#b8cfe5"/>
<path d="M497.7 181.6 H505.6 L509 187 V196.1 H497.7 Z" fill="#fbfcfe" stroke="#2f5fa6" stroke-width="1.2"/>
<rect x="505.2" y="181" width="1.8" height="1.8" fill="#2f5fa6"/>
<path d="M505.6 183.2 L506.6 183.2 L506.6 184.4 L507.8 184.4 L507.8 185.6 L509 185.6" fill="none" stroke="#2f5fa6" stroke-width="0.8" opacity="0.85"/>
<rect x="483" y="209" width="9" height="1" fill="#b8cfe5"/>
<path d="M497.7 201.6 H505.6 L509 207 V216.1 H497.7 Z" fill="#fbfcfe" stroke="#2f5fa6" stroke-width="1.2"/>
<rect x="505.2" y="201" width="1.8" height="1.8" fill="#2f5fa6"/>
<path d="M505.6 203.2 L506.6 203.2 L506.6 204.4 L507.8 204.4 L507.8 205.6 L509 205.6" fill="none" stroke="#2f5fa6" stroke-width="0.8" opacity="0.85"/>
<rect x="483" y="229" width="9" height="1" fill="#b8cfe5"/>
<path d="M497.7 221.6 H505.6 L509 227 V236.1 H497.7 Z" fill="#fbfcfe" stroke="#2f5fa6" stroke-width="1.2"/>
<rect x="505.2" y="221" width="1.8" height="1.8" fill="#2f5fa6"/>
<path d="M505.6 223.2 L506.6 223.2 L506.6 224.4 L507.8 224.4 L507.8 225.6 L509 225.6" fill="none" stroke="#2f5fa6" stroke-width="0.8" opacity="0.85"/>
<rect x="483" y="249" width="9" height="1" fill="#b8cfe5"/>
<path d="M497.7 241.6 H505.6 L509 247 V256.1 H497.7 Z" fill="#fbfcfe" stroke="#2f5fa6" stroke-width="1.2"/>
<rect x="505.2" y="241" width="1.8" height="1.8" fill="#2f5fa6"/>
<path d="M505.6 243.2 L506.6 243.2 L506.6 244.4 L507.8 244.4 L507.8 245.6 L509 245.6" fill="none" stroke="#2f5fa6" stroke-width="0.8" opacity="0.85"/>
<rect x="483" y="269" width="9" height="1" fill="#b8cfe5"/>
<path d="M497.7 261.6 H505.6 L509 267 V276.1 H497.7 Z" fill="#fbfcfe" stroke="#2f5fa6" stroke-width="1.2"/>
<rect x="505.2" y="261" width="1.8" height="1.8" fill="#2f5fa6"/>
<path d="M505.6 263.2 L506.6 263.2 L506.6 264.4 L507.8 264.4 L507.8 265.6 L509 265.6" fill="none" stroke="#2f5fa6" stroke-width="0.8" opacity="0.85"/>
<rect x="483" y="289" width="9" height="1" fill="#b8cfe5"/>
<path d="M497.7 281.6 H505.6 L509 287 V296.1 H497.7 Z" fill="#fbfcfe" stroke="#2f5fa6" stroke-width="1.2"/>
<rect x="505.2" y="281" width="1.8" height="1.8" fill="#2f5fa6"/>
<path d="M505.6 283.2 L506.6 283.2 L506.6 284.4 L507.8 284.4 L507.8 285.6 L509 285.6" fill="none" stroke="#2f5fa6" stroke-width="0.8" opacity="0.85"/>
<rect x="483" y="309" width="9" height="1" fill="#b8cfe5"/>
<path d="M497.7 301.6 H505.6 L509 307 V316.1 H497.7 Z" fill="#fbfcfe" stroke="#2f5fa6" stroke-width="1.2"/>
<rect x="505.2" y="301" width="1.8" height="1.8" fill="#2f5fa6"/>
<path d="M505.6 303.2 L506.6 303.2 L506.6 304.4 L507.8 304.4 L507.8 305.6 L509 305.6" fill="none" stroke="#2f5fa6" stroke-width="0.8" opacity="0.85"/>
<rect x="483" y="329" width="9" height="1" fill="#b8cfe5"/>
<path d="M497.7 321.6 H505.6 L509 327 V336.1 H497.7 Z" fill="#fbfcfe" stroke="#2f5fa6" stroke-width="1.2"/>
<rect x="505.2" y="321" width="1.8" height="1.8" fill="#2f5fa6"/>
<path d="M505.6 323.2 L506.6 323.2 L506.6 324.4 L507.8 324.4 L507.8 325.6 L509 325.6" fill="none" stroke="#2f5fa6" stroke-width="0.8" opacity="0.85"/>
<rect x="483" y="349" width="9" height="1" fill="#b8cfe5"/>
<path d="M497.7 341.6 H505.6 L509 347 V356.1 H497.7 Z" fill="#fbfcfe" stroke="#2f5fa6" stroke-width="1.2"/>
<rect x="505.2" y="341" width="1.8" height="1.8" fill="#2f5fa6"/>
<path d="M505.6 343.2 L506.6 343.2 L506.6 344.4 L507.8 344.4 L507.8 345.6 L509 345.6" fill="none" stroke="#2f5fa6" stroke-width="0.8" opacity="0.85"/>
<rect x="483" y="369" width="9" height="1" fill="#b8cfe5"/>
<path d="M497.7 361.6 H505.6 L509 367 V376.1 H497.7 Z" fill="#fbfcfe" stroke="#2f5fa6" stroke-width="1.2"/>
<rect x="505.2" y="361" width="1.8" height="1.8" fill="#2f5fa6"/>
<path d="M505.6 363.2 L506.6 363.2 L506.6 364.4 L507.8 364.4 L507.8 365.6 L509 365.6" fill="none" stroke="#2f5fa6" stroke-width="0.8" opacity="0.85"/>
<rect x="483" y="389" width="9" height="1" fill="#b8cfe5"/>
<path d="M497.7 381.6 H505.6 L509 387 V396.1 H497.7 Z" fill="#fbfcfe" stroke="#2f5fa6" stroke-width="1.2"/>
<rect x="505.2" y="381" width="1.8" height="1.8" fill="#2f5fa6"/>
<path d="M505.6 383.2 L506.6 383.2 L506.6 384.4 L507.8 384.4 L507.8 385.6 L509 385.6" fill="none" stroke="#2f5fa6" stroke-width="0.8" opacity="0.85"/>
</g></svg></svg>
<!-- horizontal divider -->
<div class="a" style="left:432px;top:400px;width:329px;height:10px;background:#eeeeee;border-top:1px solid #fafafa;border-left:1px solid #fafafa"></div>
<svg width="762" height="528"><rect x="437" y="405" width="1" height="1" fill="#7a8a99"/><rect x="438" y="406" width="1" height="1" fill="#fff"/><rect x="441" y="405" width="1" height="1" fill="#7a8a99"/><rect x="442" y="406" width="1" height="1" fill="#fff"/><rect x="445" y="405" width="1" height="1" fill="#7a8a99"/><rect x="446" y="406" width="1" height="1" fill="#fff"/><rect x="449" y="405" width="1" height="1" fill="#7a8a99"/><rect x="450" y="406" width="1" height="1" fill="#fff"/><rect x="453" y="405" width="1" height="1" fill="#7a8a99"/><rect x="454" y="406" width="1" height="1" fill="#fff"/><rect x="457" y="405" width="1" height="1" fill="#7a8a99"/><rect x="458" y="406" width="1" height="1" fill="#fff"/><rect x="461" y="405" width="1" height="1" fill="#7a8a99"/><rect x="462" y="406" width="1" height="1" fill="#fff"/><rect x="465" y="405" width="1" height="1" fill="#7a8a99"/><rect x="466" y="406" width="1" height="1" fill="#fff"/><rect x="469" y="405" width="1" height="1" fill="#7a8a99"/><rect x="470" y="406" width="1" height="1" fill="#fff"/><rect x="473" y="405" width="1" height="1" fill="#7a8a99"/><rect x="474" y="406" width="1" height="1" fill="#fff"/><rect x="477" y="405" width="1" height="1" fill="#7a8a99"/><rect x="478" y="406" width="1" height="1" fill="#fff"/><rect x="481" y="405" width="1" height="1" fill="#7a8a99"/><rect x="482" y="406" width="1" height="1" fill="#fff"/><rect x="485" y="405" width="1" height="1" fill="#7a8a99"/><rect x="486" y="406" width="1" height="1" fill="#fff"/><rect x="489" y="405" width="1" height="1" fill="#7a8a99"/><rect x="490" y="406" width="1" height="1" fill="#fff"/><rect x="493" y="405" width="1" height="1" fill="#7a8a99"/><rect x="494" y="406" width="1" height="1" fill="#fff"/><rect x="497" y="405" width="1" height="1" fill="#7a8a99"/><rect x="498" y="406" width="1" height="1" fill="#fff"/><rect x="501" y="405" width="1" height="1" fill="#7a8a99"/><rect x="502" y="406" width="1" height="1" fill="#fff"/><rect x="505" y="405" width="1" height="1" fill="#7a8a99"/><rect x="506" y="406" width="1" height="1" fill="#fff"/><rect x="509" y="405" width="1" height="1" fill="#7a8a99"/><rect x="510" y="406" width="1" height="1" fill="#fff"/><rect x="513" y="405" width="1" height="1" fill="#7a8a99"/><rect x="514" y="406" width="1" height="1" fill="#fff"/><rect x="517" y="405" width="1" height="1" fill="#7a8a99"/><rect x="518" y="406" width="1" height="1" fill="#fff"/><rect x="521" y="405" width="1" height="1" fill="#7a8a99"/><rect x="522" y="406" width="1" height="1" fill="#fff"/><rect x="525" y="405" width="1" height="1" fill="#7a8a99"/><rect x="526" y="406" width="1" height="1" fill="#fff"/><rect x="529" y="405" width="1" height="1" fill="#7a8a99"/><rect x="530" y="406" width="1" height="1" fill="#fff"/><rect x="533" y="405" width="1" height="1" fill="#7a8a99"/><rect x="534" y="406" width="1" height="1" fill="#fff"/><rect x="537" y="405" width="1" height="1" fill="#7a8a99"/><rect x="538" y="406" width="1" height="1" fill="#fff"/><rect x="541" y="405" width="1" height="1" fill="#7a8a99"/><rect x="542" y="406" width="1" height="1" fill="#fff"/><rect x="545" y="405" width="1" height="1" fill="#7a8a99"/><rect x="546" y="406" width="1" height="1" fill="#fff"/><rect x="549" y="405" width="1" height="1" fill="#7a8a99"/><rect x="550" y="406" width="1" height="1" fill="#fff"/><rect x="553" y="405" width="1" height="1" fill="#7a8a99"/><rect x="554" y="406" width="1" height="1" fill="#fff"/><rect x="557" y="405" width="1" height="1" fill="#7a8a99"/><rect x="558" y="406" width="1" height="1" fill="#fff"/><rect x="561" y="405" width="1" height="1" fill="#7a8a99"/><rect x="562" y="406" width="1" height="1" fill="#fff"/><rect x="565" y="405" width="1" height="1" fill="#7a8a99"/><rect x="566" y="406" width="1" height="1" fill="#fff"/><rect x="569" y="405" width="1" height="1" fill="#7a8a99"/><rect x="570" y="406" width="1" height="1" fill="#fff"/><rect x="573" y="405" width="1" height="1" fill="#7a8a99"/><rect x="574" y="406" width="1" height="1" fill="#fff"/><rect x="577" y="405" width="1" height="1" fill="#7a8a99"/><rect x="578" y="406" width="1" height="1" fill="#fff"/><rect x="581" y="405" width="1" height="1" fill="#7a8a99"/><rect x="582" y="406" width="1" height="1" fill="#fff"/><rect x="585" y="405" width="1" height="1" fill="#7a8a99"/><rect x="586" y="406" width="1" height="1" fill="#fff"/><rect x="589" y="405" width="1" height="1" fill="#7a8a99"/><rect x="590" y="406" width="1" height="1" fill="#fff"/><rect x="593" y="405" width="1" height="1" fill="#7a8a99"/><rect x="594" y="406" width="1" height="1" fill="#fff"/><rect x="597" y="405" width="1" height="1" fill="#7a8a99"/><rect x="598" y="406" width="1" height="1" fill="#fff"/><rect x="601" y="405" width="1" height="1" fill="#7a8a99"/><rect x="602" y="406" width="1" height="1" fill="#fff"/><rect x="605" y="405" width="1" height="1" fill="#7a8a99"/><rect x="606" y="406" width="1" height="1" fill="#fff"/><rect x="609" y="405" width="1" height="1" fill="#7a8a99"/><rect x="610" y="406" width="1" height="1" fill="#fff"/><rect x="613" y="405" width="1" height="1" fill="#7a8a99"/><rect x="614" y="406" width="1" height="1" fill="#fff"/><rect x="617" y="405" width="1" height="1" fill="#7a8a99"/><rect x="618" y="406" width="1" height="1" fill="#fff"/><rect x="621" y="405" width="1" height="1" fill="#7a8a99"/><rect x="622" y="406" width="1" height="1" fill="#fff"/><rect x="625" y="405" width="1" height="1" fill="#7a8a99"/><rect x="626" y="406" width="1" height="1" fill="#fff"/><rect x="629" y="405" width="1" height="1" fill="#7a8a99"/><rect x="630" y="406" width="1" height="1" fill="#fff"/><rect x="633" y="405" width="1" height="1" fill="#7a8a99"/><rect x="634" y="406" width="1" height="1" fill="#fff"/><rect x="637" y="405" width="1" height="1" fill="#7a8a99"/><rect x="638" y="406" width="1" height="1" fill="#fff"/><rect x="641" y="405" width="1" height="1" fill="#7a8a99"/><rect x="642" y="406" width="1" height="1" fill="#fff"/><rect x="645" y="405" width="1" height="1" fill="#7a8a99"/><rect x="646" y="406" width="1" height="1" fill="#fff"/><rect x="649" y="405" width="1" height="1" fill="#7a8a99"/><rect x="650" y="406" width="1" height="1" fill="#fff"/><rect x="653" y="405" width="1" height="1" fill="#7a8a99"/><rect x="654" y="406" width="1" height="1" fill="#fff"/><rect x="657" y="405" width="1" height="1" fill="#7a8a99"/><rect x="658" y="406" width="1" height="1" fill="#fff"/><rect x="661" y="405" width="1" height="1" fill="#7a8a99"/><rect x="662" y="406" width="1" height="1" fill="#fff"/><rect x="665" y="405" width="1" height="1" fill="#7a8a99"/><rect x="666" y="406" width="1" height="1" fill="#fff"/><rect x="669" y="405" width="1" height="1" fill="#7a8a99"/><rect x="670" y="406" width="1" height="1" fill="#fff"/><rect x="673" y="405" width="1" height="1" fill="#7a8a99"/><rect x="674" y="406" width="1" height="1" fill="#fff"/><rect x="677" y="405" width="1" height="1" fill="#7a8a99"/><rect x="678" y="406" width="1" height="1" fill="#fff"/><rect x="681" y="405" width="1" height="1" fill="#7a8a99"/><rect x="682" y="406" width="1" height="1" fill="#fff"/><rect x="685" y="405" width="1" height="1" fill="#7a8a99"/><rect x="686" y="406" width="1" height="1" fill="#fff"/><rect x="689" y="405" width="1" height="1" fill="#7a8a99"/><rect x="690" y="406" width="1" height="1" fill="#fff"/><rect x="693" y="405" width="1" height="1" fill="#7a8a99"/><rect x="694" y="406" width="1" height="1" fill="#fff"/><rect x="697" y="405" width="1" height="1" fill="#7a8a99"/><rect x="698" y="406" width="1" height="1" fill="#fff"/><rect x="701" y="405" width="1" height="1" fill="#7a8a99"/><rect x="702" y="406" width="1" height="1" fill="#fff"/><rect x="705" y="405" width="1" height="1" fill="#7a8a99"/><rect x="706" y="406" width="1" height="1" fill="#fff"/><rect x="709" y="405" width="1" height="1" fill="#7a8a99"/><rect x="710" y="406" width="1" height="1" fill="#fff"/><rect x="713" y="405" width="1" height="1" fill="#7a8a99"/><rect x="714" y="406" width="1" height="1" fill="#fff"/><rect x="717" y="405" width="1" height="1" fill="#7a8a99"/><rect x="718" y="406" width="1" height="1" fill="#fff"/><rect x="721" y="405" width="1" height="1" fill="#7a8a99"/><rect x="722" y="406" width="1" height="1" fill="#fff"/><rect x="725" y="405" width="1" height="1" fill="#7a8a99"/><rect x="726" y="406" width="1" height="1" fill="#fff"/><rect x="729" y="405" width="1" height="1" fill="#7a8a99"/><rect x="730" y="406" width="1" height="1" fill="#fff"/><rect x="733" y="405" width="1" height="1" fill="#7a8a99"/><rect x="734" y="406" width="1" height="1" fill="#fff"/><rect x="737" y="405" width="1" height="1" fill="#7a8a99"/><rect x="738" y="406" width="1" height="1" fill="#fff"/><rect x="741" y="405" width="1" height="1" fill="#7a8a99"/><rect x="742" y="406" width="1" height="1" fill="#fff"/><rect x="745" y="405" width="1" height="1" fill="#7a8a99"/><rect x="746" y="406" width="1" height="1" fill="#fff"/><rect x="749" y="405" width="1" height="1" fill="#7a8a99"/><rect x="750" y="406" width="1" height="1" fill="#fff"/><rect x="753" y="405" width="1" height="1" fill="#7a8a99"/><rect x="754" y="406" width="1" height="1" fill="#fff"/><rect x="757" y="405" width="1" height="1" fill="#7a8a99"/><rect x="758" y="406" width="1" height="1" fill="#fff"/><rect x="435" y="407" width="1" height="1" fill="#7a8a99"/><rect x="436" y="408" width="1" height="1" fill="#fff"/><rect x="439" y="407" width="1" height="1" fill="#7a8a99"/><rect x="440" y="408" width="1" height="1" fill="#fff"/><rect x="443" y="407" width="1" height="1" fill="#7a8a99"/><rect x="444" y="408" width="1" height="1" fill="#fff"/><rect x="447" y="407" width="1" height="1" fill="#7a8a99"/><rect x="448" y="408" width="1" height="1" fill="#fff"/><rect x="451" y="407" width="1" height="1" fill="#7a8a99"/><rect x="452" y="408" width="1" height="1" fill="#fff"/><rect x="455" y="407" width="1" height="1" fill="#7a8a99"/><rect x="456" y="408" width="1" height="1" fill="#fff"/><rect x="459" y="407" width="1" height="1" fill="#7a8a99"/><rect x="460" y="408" width="1" height="1" fill="#fff"/><rect x="463" y="407" width="1" height="1" fill="#7a8a99"/><rect x="464" y="408" width="1" height="1" fill="#fff"/><rect x="467" y="407" width="1" height="1" fill="#7a8a99"/><rect x="468" y="408" width="1" height="1" fill="#fff"/><rect x="471" y="407" width="1" height="1" fill="#7a8a99"/><rect x="472" y="408" width="1" height="1" fill="#fff"/><rect x="475" y="407" width="1" height="1" fill="#7a8a99"/><rect x="476" y="408" width="1" height="1" fill="#fff"/><rect x="479" y="407" width="1" height="1" fill="#7a8a99"/><rect x="480" y="408" width="1" height="1" fill="#fff"/><rect x="483" y="407" width="1" height="1" fill="#7a8a99"/><rect x="484" y="408" width="1" height="1" fill="#fff"/><rect x="487" y="407" width="1" height="1" fill="#7a8a99"/><rect x="488" y="408" width="1" height="1" fill="#fff"/><rect x="491" y="407" width="1" height="1" fill="#7a8a99"/><rect x="492" y="408" width="1" height="1" fill="#fff"/><rect x="495" y="407" width="1" height="1" fill="#7a8a99"/><rect x="496" y="408" width="1" height="1" fill="#fff"/><rect x="499" y="407" width="1" height="1" fill="#7a8a99"/><rect x="500" y="408" width="1" height="1" fill="#fff"/><rect x="503" y="407" width="1" height="1" fill="#7a8a99"/><rect x="504" y="408" width="1" height="1" fill="#fff"/><rect x="507" y="407" width="1" height="1" fill="#7a8a99"/><rect x="508" y="408" width="1" height="1" fill="#fff"/><rect x="511" y="407" width="1" height="1" fill="#7a8a99"/><rect x="512" y="408" width="1" height="1" fill="#fff"/><rect x="515" y="407" width="1" height="1" fill="#7a8a99"/><rect x="516" y="408" width="1" height="1" fill="#fff"/><rect x="519" y="407" width="1" height="1" fill="#7a8a99"/><rect x="520" y="408" width="1" height="1" fill="#fff"/><rect x="523" y="407" width="1" height="1" fill="#7a8a99"/><rect x="524" y="408" width="1" height="1" fill="#fff"/><rect x="527" y="407" width="1" height="1" fill="#7a8a99"/><rect x="528" y="408" width="1" height="1" fill="#fff"/><rect x="531" y="407" width="1" height="1" fill="#7a8a99"/><rect x="532" y="408" width="1" height="1" fill="#fff"/><rect x="535" y="407" width="1" height="1" fill="#7a8a99"/><rect x="536" y="408" width="1" height="1" fill="#fff"/><rect x="539" y="407" width="1" height="1" fill="#7a8a99"/><rect x="540" y="408" width="1" height="1" fill="#fff"/><rect x="543" y="407" width="1" height="1" fill="#7a8a99"/><rect x="544" y="408" width="1" height="1" fill="#fff"/><rect x="547" y="407" width="1" height="1" fill="#7a8a99"/><rect x="548" y="408" width="1" height="1" fill="#fff"/><rect x="551" y="407" width="1" height="1" fill="#7a8a99"/><rect x="552" y="408" width="1" height="1" fill="#fff"/><rect x="555" y="407" width="1" height="1" fill="#7a8a99"/><rect x="556" y="408" width="1" height="1" fill="#fff"/><rect x="559" y="407" width="1" height="1" fill="#7a8a99"/><rect x="560" y="408" width="1" height="1" fill="#fff"/><rect x="563" y="407" width="1" height="1" fill="#7a8a99"/><rect x="564" y="408" width="1" height="1" fill="#fff"/><rect x="567" y="407" width="1" height="1" fill="#7a8a99"/><rect x="568" y="408" width="1" height="1" fill="#fff"/><rect x="571" y="407" width="1" height="1" fill="#7a8a99"/><rect x="572" y="408" width="1" height="1" fill="#fff"/><rect x="575" y="407" width="1" height="1" fill="#7a8a99"/><rect x="576" y="408" width="1" height="1" fill="#fff"/><rect x="579" y="407" width="1" height="1" fill="#7a8a99"/><rect x="580" y="408" width="1" height="1" fill="#fff"/><rect x="583" y="407" width="1" height="1" fill="#7a8a99"/><rect x="584" y="408" width="1" height="1" fill="#fff"/><rect x="587" y="407" width="1" height="1" fill="#7a8a99"/><rect x="588" y="408" width="1" height="1" fill="#fff"/><rect x="591" y="407" width="1" height="1" fill="#7a8a99"/><rect x="592" y="408" width="1" height="1" fill="#fff"/><rect x="595" y="407" width="1" height="1" fill="#7a8a99"/><rect x="596" y="408" width="1" height="1" fill="#fff"/><rect x="599" y="407" width="1" height="1" fill="#7a8a99"/><rect x="600" y="408" width="1" height="1" fill="#fff"/><rect x="603" y="407" width="1" height="1" fill="#7a8a99"/><rect x="604" y="408" width="1" height="1" fill="#fff"/><rect x="607" y="407" width="1" height="1" fill="#7a8a99"/><rect x="608" y="408" width="1" height="1" fill="#fff"/><rect x="611" y="407" width="1" height="1" fill="#7a8a99"/><rect x="612" y="408" width="1" height="1" fill="#fff"/><rect x="615" y="407" width="1" height="1" fill="#7a8a99"/><rect x="616" y="408" width="1" height="1" fill="#fff"/><rect x="619" y="407" width="1" height="1" fill="#7a8a99"/><rect x="620" y="408" width="1" height="1" fill="#fff"/><rect x="623" y="407" width="1" height="1" fill="#7a8a99"/><rect x="624" y="408" width="1" height="1" fill="#fff"/><rect x="627" y="407" width="1" height="1" fill="#7a8a99"/><rect x="628" y="408" width="1" height="1" fill="#fff"/><rect x="631" y="407" width="1" height="1" fill="#7a8a99"/><rect x="632" y="408" width="1" height="1" fill="#fff"/><rect x="635" y="407" width="1" height="1" fill="#7a8a99"/><rect x="636" y="408" width="1" height="1" fill="#fff"/><rect x="639" y="407" width="1" height="1" fill="#7a8a99"/><rect x="640" y="408" width="1" height="1" fill="#fff"/><rect x="643" y="407" width="1" height="1" fill="#7a8a99"/><rect x="644" y="408" width="1" height="1" fill="#fff"/><rect x="647" y="407" width="1" height="1" fill="#7a8a99"/><rect x="648" y="408" width="1" height="1" fill="#fff"/><rect x="651" y="407" width="1" height="1" fill="#7a8a99"/><rect x="652" y="408" width="1" height="1" fill="#fff"/><rect x="655" y="407" width="1" height="1" fill="#7a8a99"/><rect x="656" y="408" width="1" height="1" fill="#fff"/><rect x="659" y="407" width="1" height="1" fill="#7a8a99"/><rect x="660" y="408" width="1" height="1" fill="#fff"/><rect x="663" y="407" width="1" height="1" fill="#7a8a99"/><rect x="664" y="408" width="1" height="1" fill="#fff"/><rect x="667" y="407" width="1" height="1" fill="#7a8a99"/><rect x="668" y="408" width="1" height="1" fill="#fff"/><rect x="671" y="407" width="1" height="1" fill="#7a8a99"/><rect x="672" y="408" width="1" height="1" fill="#fff"/><rect x="675" y="407" width="1" height="1" fill="#7a8a99"/><rect x="676" y="408" width="1" height="1" fill="#fff"/><rect x="679" y="407" width="1" height="1" fill="#7a8a99"/><rect x="680" y="408" width="1" height="1" fill="#fff"/><rect x="683" y="407" width="1" height="1" fill="#7a8a99"/><rect x="684" y="408" width="1" height="1" fill="#fff"/><rect x="687" y="407" width="1" height="1" fill="#7a8a99"/><rect x="688" y="408" width="1" height="1" fill="#fff"/><rect x="691" y="407" width="1" height="1" fill="#7a8a99"/><rect x="692" y="408" width="1" height="1" fill="#fff"/><rect x="695" y="407" width="1" height="1" fill="#7a8a99"/><rect x="696" y="408" width="1" height="1" fill="#fff"/><rect x="699" y="407" width="1" height="1" fill="#7a8a99"/><rect x="700" y="408" width="1" height="1" fill="#fff"/><rect x="703" y="407" width="1" height="1" fill="#7a8a99"/><rect x="704" y="408" width="1" height="1" fill="#fff"/><rect x="707" y="407" width="1" height="1" fill="#7a8a99"/><rect x="708" y="408" width="1" height="1" fill="#fff"/><rect x="711" y="407" width="1" height="1" fill="#7a8a99"/><rect x="712" y="408" width="1" height="1" fill="#fff"/><rect x="715" y="407" width="1" height="1" fill="#7a8a99"/><rect x="716" y="408" width="1" height="1" fill="#fff"/><rect x="719" y="407" width="1" height="1" fill="#7a8a99"/><rect x="720" y="408" width="1" height="1" fill="#fff"/><rect x="723" y="407" width="1" height="1" fill="#7a8a99"/><rect x="724" y="408" width="1" height="1" fill="#fff"/><rect x="727" y="407" width="1" height="1" fill="#7a8a99"/><rect x="728" y="408" width="1" height="1" fill="#fff"/><rect x="731" y="407" width="1" height="1" fill="#7a8a99"/><rect x="732" y="408" width="1" height="1" fill="#fff"/><rect x="735" y="407" width="1" height="1" fill="#7a8a99"/><rect x="736" y="408" width="1" height="1" fill="#fff"/><rect x="739" y="407" width="1" height="1" fill="#7a8a99"/><rect x="740" y="408" width="1" height="1" fill="#fff"/><rect x="743" y="407" width="1" height="1" fill="#7a8a99"/><rect x="744" y="408" width="1" height="1" fill="#fff"/><rect x="747" y="407" width="1" height="1" fill="#7a8a99"/><rect x="748" y="408" width="1" height="1" fill="#fff"/><rect x="751" y="407" width="1" height="1" fill="#7a8a99"/><rect x="752" y="408" width="1" height="1" fill="#fff"/><rect x="755" y="407" width="1" height="1" fill="#7a8a99"/><rect x="756" y="408" width="1" height="1" fill="#fff"/><rect x="759" y="407" width="1" height="1" fill="#7a8a99"/><rect x="760" y="408" width="1" height="1" fill="#fff"/></svg>
<!-- preview -->
<div class="a" style="left:432px;top:410px;width:329px;height:1px;background:#7a8a99"></div>
<div class="a" style="left:434px;top:411px;width:328px;height:115px;background:#fff"></div>
<div class="a" style="left:2px;top:526px;width:760px;height:2px;background:#dadada"></div>
<div class="a" style="left:2px;top:524px;width:430px;height:2px;background:#fbfbfb"></div>
<!-- circuit drawing (canvas) -->
<svg width="762" height="528">
  <g stroke="#009900" stroke-width="1.5" fill="none" stroke-linecap="round">
    <line x1="148" y1="290.5" x2="184.5" y2="290.5"/>
    <circle cx="192.5" cy="290.5" r="23.6"/>
    <line x1="184.5" y1="270.2" x2="184.5" y2="310.6"/>
    <line x1="184.5" y1="282.3" x2="204.5" y2="270.6"/>
    <line x1="204.5" y1="250.1" x2="204.5" y2="270.6"/>
    <line x1="184.5" y1="298.6" x2="199" y2="306.6"/>
    <line x1="204.5" y1="310.6" x2="204.5" y2="331"/>
  </g>
  <path d="M200.2 302 L195.9 310.4 L204.9 310.9 Z" fill="#009900"/>
  <rect x="140" y="286" width="8" height="8" fill="#f00"/>
</svg>
<!-- preview drawing -->
<svg width="762" height="528">
  <g stroke="#000" stroke-width="1.6" fill="none" stroke-linecap="round">
    <line x1="444" y1="469.5" x2="492.5" y2="469.5"/>
    <circle cx="501.5" cy="469.5" r="28.8"/>
    <line x1="492.5" y1="445.2" x2="492.5" y2="493.8"/>
    <line x1="492.5" y1="459.2" x2="516.5" y2="445"/>
    <line x1="516.5" y1="421.3" x2="516.5" y2="445"/>
    <line x1="492.5" y1="480" x2="509" y2="489.3"/>
    <line x1="516.5" y1="493.6" x2="516.5" y2="518"/>
  </g>
  <path d="M511.4 483 L505.8 493.6 L517 493.8 Z" fill="#000"/>
</svg>
<div class="t" style="left:9.00px;top:26px;font-weight:bold;font-size:12.5px;letter-spacing:0.313px;transform:scaleX(1.0435);transform-origin:0 0;-webkit-text-stroke:0.15px #333;font-family:'Liberation Sans',sans-serif;color:#333;">File</div>
<div class="t" style="left:45.70px;top:26px;font-weight:bold;font-size:12.5px;letter-spacing:0.125px;transform:scaleX(1.0153);transform-origin:0 0;-webkit-text-stroke:0.15px #333;font-family:'Liberation Sans',sans-serif;color:#333;">Edit</div>
<div class="t" style="left:84.30px;top:26px;font-weight:bold;font-size:12.5px;letter-spacing:0.717px;transform:scaleX(1.0754);transform-origin:0 0;-webkit-text-stroke:0.15px #333;font-family:'Liberation Sans',sans-serif;color:#333;">View</div>
<div class="t" style="left:131.70px;top:26px;font-weight:bold;font-size:12.5px;letter-spacing:0.211px;transform:scaleX(1.0314);transform-origin:0 0;-webkit-text-stroke:0.15px #333;font-family:'Liberation Sans',sans-serif;color:#333;">Circuit</div>
<div class="t" style="left:188.30px;top:26px;font-weight:bold;font-size:12.5px;letter-spacing:0.412px;transform:scaleX(1.0446);transform-origin:0 0;-webkit-text-stroke:0.15px #333;font-family:'Liberation Sans',sans-serif;color:#333;">About</div>
<div class="t" style="left:10.80px;top:72px;font-weight:bold;font-size:12.5px;letter-spacing:0.422px;transform:scaleX(1.0560);transform-origin:0 0;-webkit-text-stroke:0.15px #333;font-family:'Liberation Sans',sans-serif;color:#333;">Select</div>
<div class="t" style="left:66.70px;top:72px;font-weight:bold;font-size:12.5px;letter-spacing:0.757px;transform:scaleX(1.0670);transform-origin:0 0;-webkit-text-stroke:0.15px #333;font-family:'Liberation Sans',sans-serif;color:#333;">Zoom</div>
<div class="t" style="left:118.30px;top:72px;font-weight:bold;font-size:12.5px;letter-spacing:0.869px;transform:scaleX(1.0780);transform-origin:0 0;-webkit-text-stroke:0.15px #333;font-family:'Liberation Sans',sans-serif;color:#333;">Pan</div>
<div class="t" style="left:157.50px;top:72px;font-weight:bold;font-size:12.5px;letter-spacing:0.336px;transform:scaleX(1.0392);transform-origin:0 0;-webkit-text-stroke:0.15px #333;font-family:'Liberation Sans',sans-serif;color:#333;">Line</div>
<div class="t" style="left:199.30px;top:72px;font-weight:bold;font-size:12.5px;letter-spacing:0.453px;transform:scaleX(1.0530);transform-origin:0 0;-webkit-text-stroke:0.15px #333;font-family:'Liberation Sans',sans-serif;color:#333;">Text</div>
<div class="t" style="left:241.30px;top:72px;font-weight:bold;font-size:12.5px;letter-spacing:0.582px;transform:scaleX(1.0773);transform-origin:0 0;-webkit-text-stroke:0.15px #333;font-family:'Liberation Sans',sans-serif;color:#333;">Bézier</div>
<div class="t" style="left:298.70px;top:72px;font-weight:bold;font-size:12.5px;letter-spacing:0.551px;transform:scaleX(1.0679);transform-origin:0 0;-webkit-text-stroke:0.15px #333;font-family:'Liberation Sans',sans-serif;color:#333;">Polygon</div>
<div class="t" style="left:368.00px;top:72px;font-weight:bold;font-size:12.5px;letter-spacing:0.286px;transform:scaleX(1.0322);transform-origin:0 0;-webkit-text-stroke:0.15px #333;font-family:'Liberation Sans',sans-serif;color:#333;">Curve</div>
<div class="t" style="left:419.70px;top:72px;font-weight:bold;font-size:12.5px;letter-spacing:0.338px;transform:scaleX(1.0503);transform-origin:0 0;-webkit-text-stroke:0.15px #333;font-family:'Liberation Sans',sans-serif;color:#333;">Ellipse</div>
<div class="t" style="left:477.90px;top:72px;font-weight:bold;font-size:12.5px;letter-spacing:0.414px;transform:scaleX(1.0551);transform-origin:0 0;-webkit-text-stroke:0.15px #333;font-family:'Liberation Sans',sans-serif;color:#333;">Rect.</div>
<div class="t" style="left:525.80px;top:72px;font-weight:bold;font-size:12.5px;letter-spacing:0.552px;transform:scaleX(1.0729);transform-origin:0 0;-webkit-text-stroke:0.15px #333;font-family:'Liberation Sans',sans-serif;color:#333;">Connection</div>
<div class="t" style="left:617.30px;top:72px;font-weight:bold;font-size:12.5px;letter-spacing:0.301px;transform:scaleX(1.0379);transform-origin:0 0;-webkit-text-stroke:0.15px #333;font-family:'Liberation Sans',sans-serif;color:#333;">PCB Line</div>
<div class="t" style="left:690.00px;top:72px;font-weight:bold;font-size:12.5px;letter-spacing:0.395px;transform:scaleX(1.0454);transform-origin:0 0;-webkit-text-stroke:0.15px #333;font-family:'Liberation Sans',sans-serif;color:#333;">PCB Pad</div>
<div class="t" style="left:6.90px;top:103px;font-weight:normal;font-size:14px;letter-spacing:0.312px;transform:scaleX(1.0284);transform-origin:0 0;font-family:'Liberation Serif',serif;color:#222;">400%</div>
<div class="t" style="left:91.00px;top:103px;font-weight:bold;font-size:12.5px;letter-spacing:-0.011px;transform:scaleX(0.9946);transform-origin:0 0;-webkit-text-stroke:0.15px #333;font-family:'Liberation Sans',sans-serif;color:#333;">Fit</div>
<div class="t" style="left:120.70px;top:103px;font-weight:bold;font-size:12.5px;letter-spacing:0.591px;transform:scaleX(1.0790);transform-origin:0 0;-webkit-text-stroke:0.15px #333;font-family:'Liberation Sans',sans-serif;color:#333;">Show grid</div>
<div class="t" style="left:204.00px;top:103px;font-weight:bold;font-size:12.5px;letter-spacing:0.576px;transform:scaleX(1.0876);transform-origin:0 0;-webkit-text-stroke:0.15px #333;font-family:'Liberation Sans',sans-serif;color:#333;">Snap to grid</div>
<div class="t" style="left:332.00px;top:104px;font-weight:bold;font-size:12.5px;letter-spacing:0.211px;transform:scaleX(1.0314);transform-origin:0 0;-webkit-text-stroke:0.15px #333;font-family:'Liberation Sans',sans-serif;color:#333;">Circuit</div>
<div class="t" style="left:522.50px;top:104px;font-weight:bold;font-size:12.5px;letter-spacing:0.440px;transform:scaleX(1.0681);transform-origin:0 0;-webkit-text-stroke:0.15px #333;font-family:'Liberation Sans',sans-serif;color:#333;">100; 10 (12.7 mm; 1.27 mm)</div>
<div class="t" style="left:276.60px;top:7px;font-weight:bold;font-size:12.5px;letter-spacing:0.324px;transform:scaleX(1.0491);transform-origin:0 0;-webkit-text-stroke:0.15px #fff;font-family:'Liberation Sans',sans-serif;color:#fff;text-shadow:0 0 1px #3c5a80,1px 1px 1px #3c5a80;">FidoCadJ 0.24.3 beta</div>
<div class="t" style="left:423.70px;top:7px;font-weight:bold;font-size:12.5px;letter-spacing:0.000px;transform:scaleX(1.1000);transform-origin:0 0;-webkit-text-stroke:0.15px #fff;font-family:'Liberation Sans',sans-serif;color:#fff;text-shadow:0 0 1px #3c5a80,1px 1px 1px #3c5a80;">*</div>
<div class="t" style="left:456.80px;top:132px;font-weight:normal;font-size:12.5px;letter-spacing:0.343px;transform:scaleX(1.0329);transform-origin:0 0;font-family:'Liberation Sans',sans-serif;color:#333;">npn</div>
<div class="t" style="left:494.73px;top:164px;font-weight:normal;font-size:12.5px;letter-spacing:0.420px;transform:scaleX(1.0717);transform-origin:0 0;font-family:'Liberation Sans',sans-serif;color:#333;">Diodes and transistors</div>
<div class="t" style="left:514.65px;top:183px;font-weight:normal;font-size:12.5px;letter-spacing:0.300px;transform:scaleX(1.0455);transform-origin:0 0;font-family:'Liberation Sans',sans-serif;color:#333;">Darlington NPN</div>
<div class="t" style="left:514.66px;top:203px;font-weight:normal;font-size:12.5px;letter-spacing:0.282px;transform:scaleX(1.0432);transform-origin:0 0;font-family:'Liberation Sans',sans-serif;color:#333;">Darlington PNP</div>
<div class="t" style="left:514.77px;top:223px;font-weight:normal;font-size:12.5px;letter-spacing:-0.175px;transform:scaleX(0.9290);transform-origin:0 0;font-family:'Liberation Sans',sans-serif;color:#333;">DIAC</div>
<div class="t" style="left:514.66px;top:243px;font-weight:normal;font-size:12.5px;letter-spacing:0.354px;transform:scaleX(1.0446);transform-origin:0 0;font-family:'Liberation Sans',sans-serif;color:#333;">Diode</div>
<div class="t" style="left:514.63px;top:263px;font-weight:normal;font-size:12.5px;letter-spacing:0.434px;transform:scaleX(1.0702);transform-origin:0 0;font-family:'Liberation Sans',sans-serif;color:#333;">Diode at 45 degrees</div>
<div class="t" style="left:514.76px;top:283px;font-weight:normal;font-size:12.5px;letter-spacing:-0.185px;transform:scaleX(0.9380);transform-origin:0 0;font-family:'Liberation Sans',sans-serif;color:#333;">LED</div>
<div class="t" style="left:514.69px;top:303px;font-weight:normal;font-size:12.5px;letter-spacing:0.096px;transform:scaleX(1.0140);transform-origin:0 0;font-family:'Liberation Sans',sans-serif;color:#333;">N channel JFET</div>
<div class="t" style="left:514.67px;top:323px;font-weight:normal;font-size:12.5px;letter-spacing:0.194px;transform:scaleX(1.0274);transform-origin:0 0;font-family:'Liberation Sans',sans-serif;color:#333;">N channel power MOSFET</div>
<div class="t" style="left:514.68px;top:343px;font-weight:normal;font-size:12.5px;letter-spacing:0.135px;transform:scaleX(1.0197);transform-origin:0 0;font-family:'Liberation Sans',sans-serif;color:#333;">N channel UJT</div>
<div class="t" style="left:514.73px;top:363px;font-weight:normal;font-size:12.5px;letter-spacing:-0.099px;transform:scaleX(0.9675);transform-origin:0 0;font-family:'Liberation Sans',sans-serif;color:#333;">NMOS</div>
<div class="t" style="left:514.65px;top:383px;font-weight:normal;font-size:12.5px;letter-spacing:0.333px;transform:scaleX(1.0531);transform-origin:0 0;font-family:'Liberation Sans',sans-serif;color:#333;">NPN (alt)</div><div class="a" style="left:435px;top:150px;width:309px;height:249px;overflow:hidden"><div class="t" style="left:59.87px;top:-4px;font-weight:normal;font-size:12.5px;letter-spacing:0.220px;transform:scaleX(1.0319);transform-origin:0 0;font-family:'Liberation Sans',sans-serif;color:#333;">DIL shapes</div></div>
</body></html>
